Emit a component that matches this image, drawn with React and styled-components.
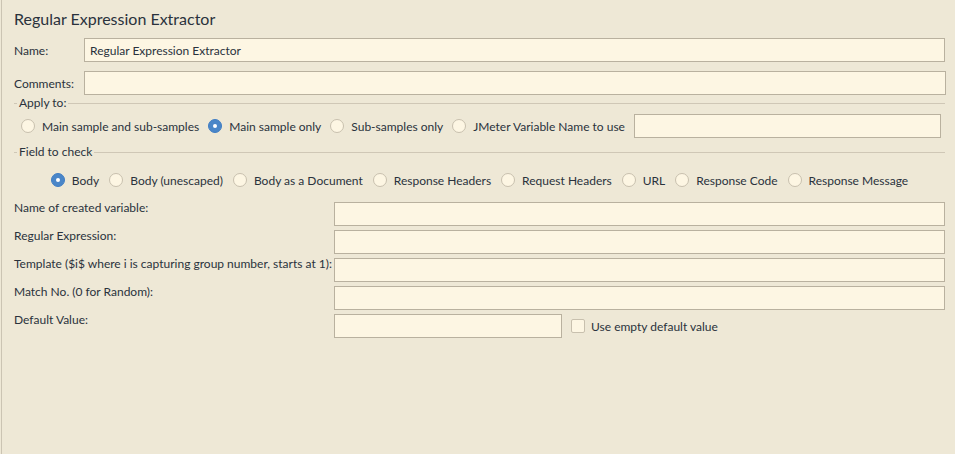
import React from "react";
import styled, { createGlobalStyle } from "styled-components";

const Global = createGlobalStyle`
    html, body {
        margin: 0;
        padding: 0;
        background: #eee8d6;
    }
    body {
        font-family: Lato, "Noto Sans", sans-serif;
        font-size: 12px;
        color: #2a323c;
    }
`;

const Panel = styled.div`
    width: 952px;
    height: 454px;
    margin-left: 1px;
    border-left: 1px solid #cbc4b3;
    padding: 9px 7px 0 12px;
    box-sizing: border-box;
    background: #eee8d6;
`;

const Title = styled.div`
    font-size: 16px;
    line-height: 20px;
    height: 29px;
`;

const Row = styled.div`
    display: flex;
    align-items: center;
    height: 24px;
    margin-bottom: ${(p) => p.$gap ?? 9}px;
    padding-right: ${(p) => p.$pr ?? 0}px;
`;

const Label = styled.div`
    width: ${(p) => p.$w}px;
    flex-shrink: 0;
    white-space: nowrap;
    align-self: ${(p) => (p.$top ? "flex-start" : "center")};
    line-height: ${(p) => (p.$top ? "11px" : "normal")};
`;

const Field = styled.div`
    flex: ${(p) => (p.$w ? "none" : 1)};
    width: ${(p) => (p.$w ? `${p.$w}px` : "auto")};
    height: 24px;
    box-sizing: border-box;
    border: 1px solid #b9b19f;
    background: #fdf6e3;
    padding: 0 5px;
    display: flex;
    align-items: center;
    white-space: nowrap;
`;

const Group = styled.fieldset`
    margin: ${(p) => p.$mt ?? 0}px ${(p) => p.$mr ?? 0}px 0 0;
    padding: 0;
    border: none;
    border-top: 1px solid #cfc7b6;
    min-width: 0;
`;

const Legend = styled.legend`
    margin-left: 3px;
    padding: 0 2px;
    line-height: 14px;
`;

const Options = styled.div`
    display: flex;
    align-items: center;
    justify-content: ${(p) => (p.$center ? "center" : "flex-start")};
    gap: ${(p) => p.$gap ?? 9}px;
    height: 24px;
    padding: ${(p) => p.$pad};
`;

const Option = styled.label`
    display: flex;
    align-items: center;
    gap: 7px;
    white-space: nowrap;
`;

const Radio = styled.span`
    width: 14px;
    height: 14px;
    box-sizing: border-box;
    border-radius: 50%;
    flex-shrink: 0;
    border: 1px solid ${(p) => (p.$on ? "#3f7dc4" : "#c8c0ae")};
    background: ${(p) => (p.$on ? "#4a86c8" : "#fdf6e3")};
    display: flex;
    align-items: center;
    justify-content: center;
    &::after {
        content: "";
        width: 4px;
        height: 4px;
        border-radius: 50%;
        background: #fff;
        display: ${(p) => (p.$on ? "block" : "none")};
    }
`;

const Check = styled.span`
    width: 14px;
    height: 14px;
    box-sizing: border-box;
    border: 1px solid #c8c0ae;
    border-radius: 2px;
    background: #fdf6e3;
    flex-shrink: 0;
`;

const Inline = styled.div`
    display: flex;
    align-items: center;
    gap: 6px;
    margin-left: 9px;
    white-space: nowrap;
`;

const Params = styled.div`
    margin-top: 10px;
`;

const applyTo = [
    { text: "Main sample and sub-samples" },
    { text: "Main sample only", on: true },
    { text: "Sub-samples only" },
    { text: "JMeter Variable Name to use" },
];

const fields = [
    { text: "Body", on: true },
    { text: "Body (unescaped)" },
    { text: "Body as a Document" },
    { text: "Response Headers" },
    { text: "Request Headers" },
    { text: "URL" },
    { text: "Response Code" },
    { text: "Response Message" },
];

const params = [
    "Name of created variable:",
    "Regular Expression:",
    "Template ($i$ where i is capturing group number, starts at 1):",
    "Match No. (0 for Random):",
];

export default function App() {
    return (
        <>
            <Global />
            <Panel>
                <Title>Regular Expression Extractor</Title>

                {/* name && comments */}
                <Row $pr={1}>
                    <Label $w={70}>Name:</Label>
                    <Field>Regular Expression Extractor</Field>
                </Row>
                <Row $gap={1}>
                    <Label $w={70}>Comments:</Label>
                    <Field />
                </Row>

                {/* apply to */}
                <Group $mr={1}>
                    <Legend>Apply to:</Legend>
                    <Options $pad="4px 0 0 7px">
                        {applyTo.map((item) => (
                            <Option key={item.text}>
                                <Radio $on={item.on} />
                                {item.text}
                            </Option>
                        ))}
                        <Field style={{ marginRight: 4 }} />
                    </Options>
                </Group>

                {/* field to check */}
                <Group $mr={1} $mt={7}>
                    <Legend>Field to check</Legend>
                    <Options $center $gap={10} $pad="9px 0 0 0">
                        {fields.map((item) => (
                            <Option key={item.text}>
                                <Radio $on={item.on} />
                                {item.text}
                            </Option>
                        ))}
                    </Options>
                </Group>

                {/* parameters */}
                <Params>
                    {params.map((text) => (
                        <Row key={text} $gap={4} $pr={1}>
                            <Label $w={320} $top>
                                {text}
                            </Label>
                            <Field />
                        </Row>
                    ))}
                    <Row $gap={4}>
                        <Label $w={320} $top>
                            Default Value:
                        </Label>
                        <Field $w={228} />
                        <Inline>
                            <Check />
                            Use empty default value
                        </Inline>
                    </Row>
                </Params>
            </Panel>
        </>
    );
}
